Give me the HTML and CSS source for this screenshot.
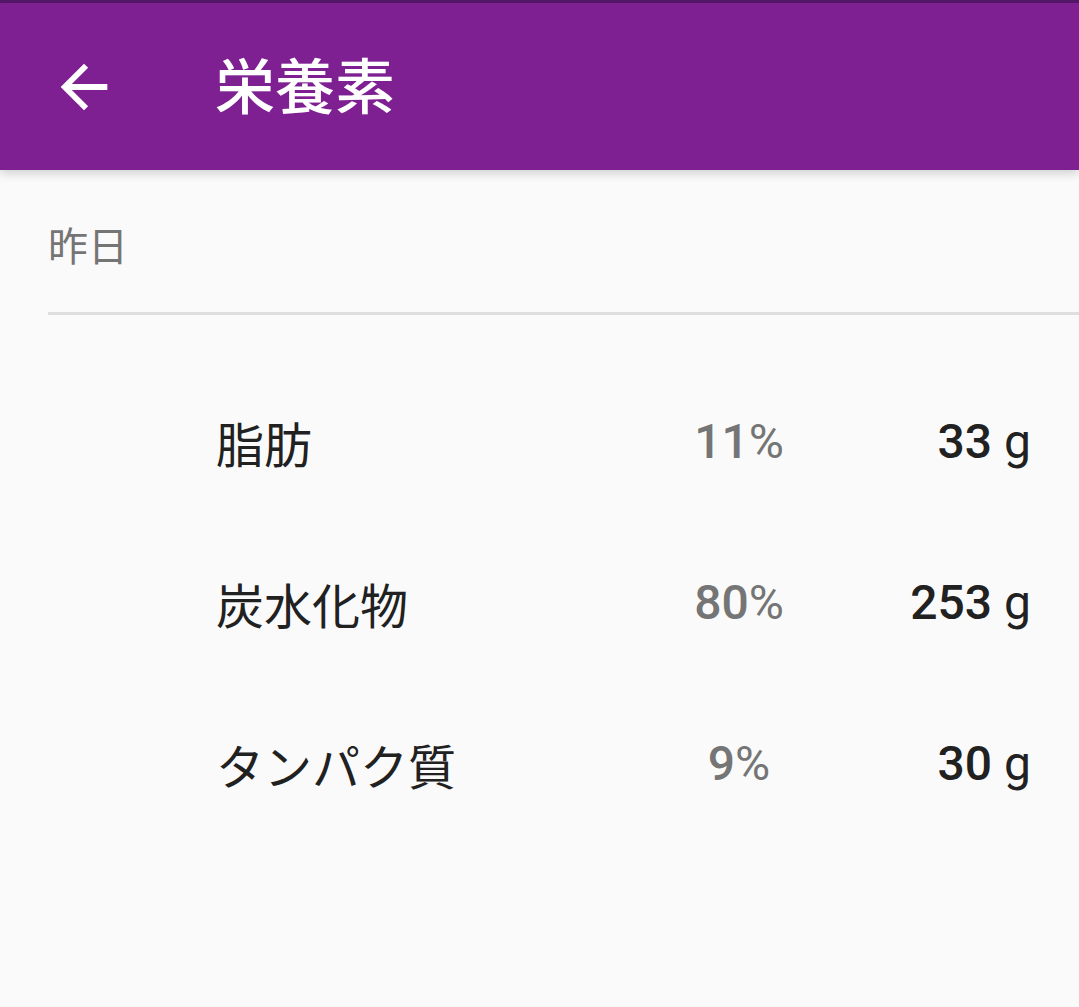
FILE: index.html
```html
<!DOCTYPE html>
<html lang="ja">
<head>
<meta charset="utf-8">
<title>栄養素</title>
<link rel="stylesheet" href="styles.css">
</head>
<body>
<div class="status"></div>
<header class="toolbar">
  <svg class="back" viewBox="0 0 24 24" aria-hidden="true"><path d="M20 11H7.83l5.59-5.59L12 4l-8 8 8 8 1.41-1.41L7.83 13H20v-2z" fill="#fff"/></svg>
  <h1 class="title">栄養素</h1>
</header>
<main class="content">
  <div class="subheader">昨日</div>
  <div class="divider"></div>
  <div class="rows">
    <div class="row"><span class="label">脂肪</span><span class="pct"><b>11</b>%</span><span class="amt"><b>33</b> g</span></div>
    <div class="row"><span class="label">炭水化物</span><span class="pct"><b>80</b>%</span><span class="amt"><b>253</b> g</span></div>
    <div class="row"><span class="label">タンパク質</span><span class="pct"><b>9</b>%</span><span class="amt"><b>30</b> g</span></div>
  </div>
</main>
</body>
</html>
```
FILE: styles.css
```css
html, body {
  margin: 0;
  padding: 0;
  background: #fafafa;
  font-family: Roboto, "Noto Sans CJK JP", sans-serif;
}
.status {
  height: 3px;
  background: #55176b;
}
.toolbar {
  position: relative;
  height: 167px;
  background: #7e2092;
  display: flex;
  align-items: center;
  box-shadow: 0 3px 10px rgba(0,0,0,0.18);
  z-index: 1;
}
.back {
  width: 70px;
  height: 70px;
  margin-left: 49px;
  flex: none;
}
.title {
  margin: 4px 0 0 96px;
  color: #fff;
  font-size: 60px;
  font-weight: 500;
  line-height: 1;
}
.subheader {
  padding: 50px 0 0 48px;
  height: 56px;
  line-height: 56px;
  font-size: 40px;
  color: #757575;
  margin-bottom: 36px;
}
.divider {
  margin-left: 48px;
  height: 3px;
  background: #dedede;
}
.rows {
  padding: 46px 48px 0 216px;
}
.row {
  display: grid;
  grid-template-columns: 1fr 200px 192px;
  align-items: center;
  height: 161px;
  font-size: 48px;
}
.label {
  color: #212121;
}
.pct {
  color: #757575;
  text-align: center;
}
.pct b {
  font-weight: 500;
}
.amt {
  color: #212121;
  text-align: right;
}
.amt b {
  font-weight: 500;
}
```
